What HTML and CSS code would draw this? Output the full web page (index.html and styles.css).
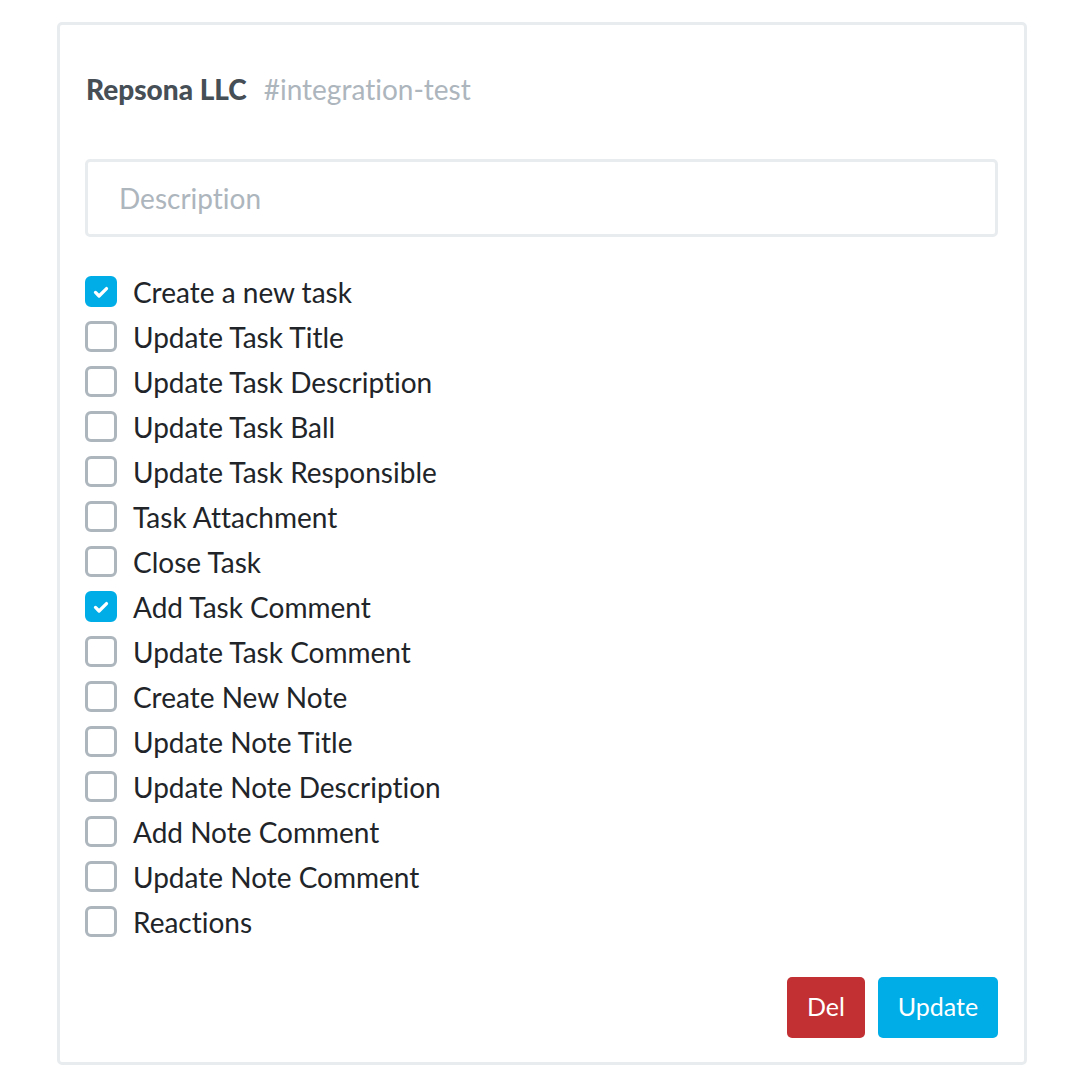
FILE: index.html
```html
<!DOCTYPE html>
<html>
<head>
<meta charset="utf-8">
<link rel="stylesheet" href="styles.css">
</head>
<body>
<div class="card">
  <div class="head"><span class="org">Repsona LLC</span><span class="chan">#integration-test</span></div>
  <input class="desc" type="text" placeholder="Description">
  <ul class="list">
    <li><span class="box on"><svg viewBox="0 0 16 16"><path d="M4 8.3l2.6 2.6L12 5.5"/></svg></span>Create a new task</li>
    <li><span class="box"></span>Update Task Title</li>
    <li><span class="box"></span>Update Task Description</li>
    <li><span class="box"></span>Update Task Ball</li>
    <li><span class="box"></span>Update Task Responsible</li>
    <li><span class="box"></span>Task Attachment</li>
    <li><span class="box"></span>Close Task</li>
    <li><span class="box on"><svg viewBox="0 0 16 16"><path d="M4 8.3l2.6 2.6L12 5.5"/></svg></span>Add Task Comment</li>
    <li><span class="box"></span>Update Task Comment</li>
    <li><span class="box"></span>Create New Note</li>
    <li><span class="box"></span>Update Note Title</li>
    <li><span class="box"></span>Update Note Description</li>
    <li><span class="box"></span>Add Note Comment</li>
    <li><span class="box"></span>Update Note Comment</li>
    <li><span class="box"></span>Reactions</li>
  </ul>
  <div class="actions">
    <button class="btn del">Del</button>
    <button class="btn upd">Update</button>
  </div>
</div>
</body>
</html>
```
FILE: styles.css
```css
html, body {
  margin: 0;
  padding: 0;
  background: #fff;
}
body {
  font-family: Lato, "Noto Sans", sans-serif;
  font-variant-ligatures: no-common-ligatures;
  color: #212529;
}
.card {
  box-sizing: border-box;
  margin: 22px 0 0 57px;
  width: 970px;
  height: 1043px;
  border: 3px solid #e9ecef;
  border-radius: 5px;
  padding: 44px 26px 24px 25px;
  display: flex;
  flex-direction: column;
}
.head {
  font-size: 28px;
  line-height: 40px;
  height: 40px;
  display: flex;
  align-items: baseline;
}
.org {
  font-weight: 900;
  color: #464e56;
  margin-left: 1px;
}
.chan {
  color: #adb5bd;
  margin-left: 17px;
}
.desc {
  box-sizing: border-box;
  margin: 50px 0 0 0;
  width: 913px;
  height: 78px;
  border: 3px solid #e9ecef;
  border-radius: 5px;
  padding: 0 31px;
  font-family: inherit;
  font-variant-ligatures: no-common-ligatures;
  font-size: 28px;
  color: #495057;
  outline: none;
}
.desc::placeholder {
  color: #adb5bd;
}
.list {
  list-style: none;
  margin: 32px 0 0 0;
  padding: 0;
}
.list li {
  height: 45px;
  display: flex;
  align-items: center;
  font-size: 28px;
}
.box {
  box-sizing: border-box;
  width: 32px;
  height: 31px;
  border: 3px solid #adb5bd;
  border-radius: 6px;
  margin-right: 16px;
  display: flex;
  align-items: center;
  justify-content: center;
  flex: none;
}
.box.on {
  background: #00ade6;
  border-color: #00ade6;
}
.box svg {
  width: 22px;
  height: 22px;
  fill: none;
  stroke: #fff;
  stroke-width: 2.4;
  stroke-linecap: round;
  stroke-linejoin: round;
}
.actions {
  margin-top: auto;
  display: flex;
  justify-content: flex-end;
  gap: 13px;
}
.btn {
  height: 61px;
  border: none;
  border-radius: 5px;
  color: #fff;
  font-family: inherit;
  font-size: 25px;
  padding: 0 0 3px 0;
}
.del {
  width: 78px;
  background: #c33033;
}
.upd {
  width: 120px;
  background: #00ade6;
}
```
